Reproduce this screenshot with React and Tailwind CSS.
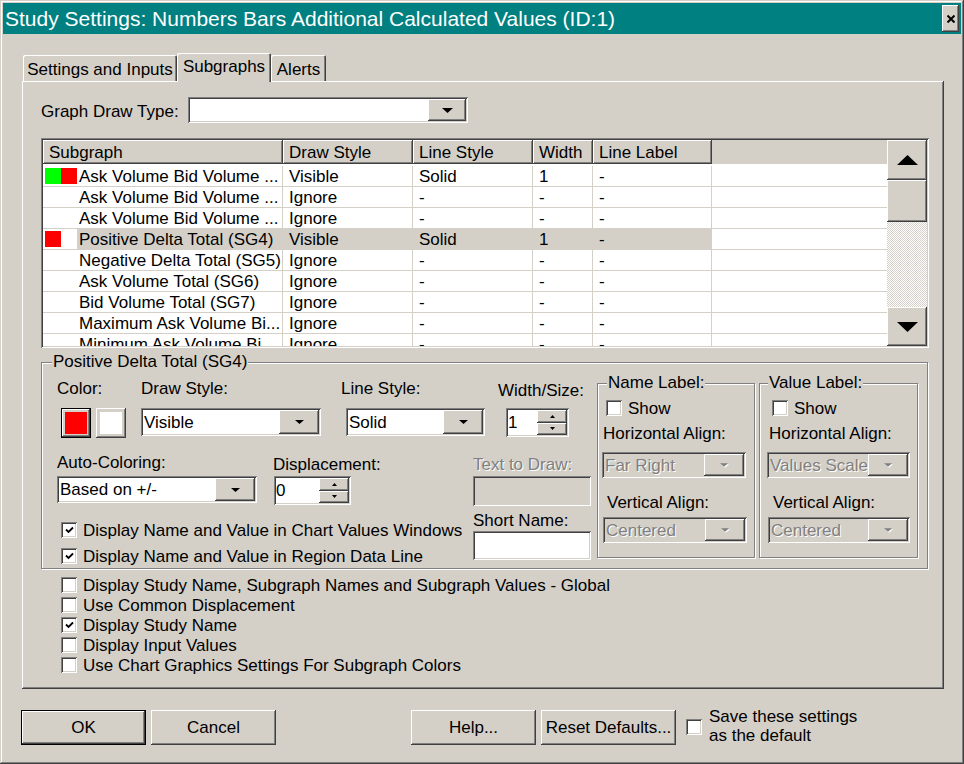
const RAISED =
  "shadow-[inset_-1px_-1px_0_#404040,inset_1px_1px_0_#ffffff,inset_-2px_-2px_0_#808080,inset_2px_2px_0_#d4d0c8]";
const SUNKEN =
  "shadow-[inset_1px_1px_0_#808080,inset_-1px_-1px_0_#ffffff,inset_2px_2px_0_#404040,inset_-2px_-2px_0_#d4d0c8]";
const ETCHED = "border border-[#808080] shadow-[inset_1px_1px_0_#ffffff,1px_1px_0_#ffffff]";
const DISABLED = "text-[#808080] [text-shadow:1px_1px_0_#ffffff]";

function Arrow({ dir = "down", w = 9, h = 5, disabled }) {
  const pts = dir === "down" ? `0,0 ${w},0 ${w / 2},${h}` : `0,${h} ${w},${h} ${w / 2},0`;
  return (
    <svg width={w} height={h + (disabled ? 1 : 0)} viewBox={`0 0 ${w + (disabled ? 1 : 0)} ${h + (disabled ? 1 : 0)}`}>
      {disabled && <polygon points={pts} fill="#ffffff" transform="translate(1,1)" />}
      <polygon points={pts} fill={disabled ? "#808080" : "#000000"} />
    </svg>
  );
}

function Combo({ className, text, disabled, btn = "w-[40px]", arrowW = 9 }) {
  return (
    <div className={`flex p-[2px] ${SUNKEN} ${disabled ? "bg-[#d4d0c8]" : "bg-white"} ${className}`}>
      <div className={`flex-1 flex items-center pl-[1px] pt-[1px] overflow-hidden whitespace-nowrap ${disabled ? DISABLED : ""}`}>
        {text}
      </div>
      <div className={`flex items-center justify-center bg-[#d4d0c8] ${RAISED} ${btn}`}>
        <Arrow w={arrowW} h={arrowW > 9 ? 5 : 4} disabled={disabled} />
      </div>
    </div>
  );
}

function Spin({ className, value }) {
  return (
    <div className={`flex p-[2px] bg-white ${SUNKEN} ${className}`}>
      <div className="flex-1 flex items-center pt-[1px]">{value}</div>
      <div className="w-[30px] flex flex-col">
        <div className={`flex-1 flex items-center justify-center bg-[#d4d0c8] ${RAISED}`}>
          <Arrow dir="up" w={5} h={3} />
        </div>
        <div className={`flex-1 flex items-center justify-center bg-[#d4d0c8] ${RAISED}`}>
          <Arrow w={5} h={3} />
        </div>
      </div>
    </div>
  );
}

function Check({ checked }) {
  return (
    <div className={`w-[16px] h-[16px] shrink-0 bg-white ${SUNKEN} flex items-center justify-center`}>
      {checked && (
        <svg width="9" height="8" viewBox="0 0 9 8">
          <polyline points="1,3.5 3.5,6 8,1.5" fill="none" stroke="#000" strokeWidth="1.8" />
        </svg>
      )}
    </div>
  );
}

function CheckRow({ checked, label, className = "h-[20px]" }) {
  return (
    <div className={`flex items-center gap-[6px] ${className}`}>
      <Check checked={checked} />
      <span className="whitespace-nowrap pt-[1px]">{label}</span>
    </div>
  );
}

function Group({ title, className, titleX = "left-[10px]", children }) {
  return (
    <div className={`relative ${ETCHED} ${className}`}>
      <span className={`absolute top-[-11px] ${titleX} bg-[#d4d0c8] px-[1px] leading-[20px] whitespace-nowrap`}>
        {title}
      </span>
      {children}
    </div>
  );
}

const rows = [
  { sw: ["#00ff00", "#ff0000"], name: "Ask Volume Bid Volume ...", ds: "Visible", ls: "Solid", w: "1" },
  { sw: [], name: "Ask Volume Bid Volume ...", ds: "Ignore", ls: "-", w: "-" },
  { sw: [], name: "Ask Volume Bid Volume ...", ds: "Ignore", ls: "-", w: "-" },
  { sw: ["#ff0000"], name: "Positive Delta Total (SG4)", ds: "Visible", ls: "Solid", w: "1", sel: true },
  { sw: [], name: "Negative Delta Total (SG5)", ds: "Ignore", ls: "-", w: "-" },
  { sw: [], name: "Ask Volume Total (SG6)", ds: "Ignore", ls: "-", w: "-" },
  { sw: [], name: "Bid Volume Total (SG7)", ds: "Ignore", ls: "-", w: "-" },
  { sw: [], name: "Maximum Ask Volume Bi...", ds: "Ignore", ls: "-", w: "-" },
  { sw: [], name: "Minimum Ask Volume Bi...", ds: "Ignore", ls: "-", w: "-" },
];

function SubgraphList() {
  const head = [
    ["Subgraph", "w-[240px]"],
    ["Draw Style", "w-[130px]"],
    ["Line Style", "w-[120px]"],
    ["Width", "w-[60px]"],
    ["Line Label", "w-[119px]"],
  ];
  return (
    <div className={`flex w-[888px] h-[210px] p-[2px] bg-white ${SUNKEN}`}>
      <div className="flex-1 flex flex-col overflow-hidden">
        <div className="flex h-[24px] shrink-0 bg-[#d4d0c8]">
          {head.map(([t, w]) => (
            <div key={t} className={`${w} ${RAISED} flex items-center pl-[6px] pt-[2px]`}>
              {t}
            </div>
          ))}
          <div className="flex-1" />
        </div>
        <div className="pt-[2px]">
          {rows.map((r, i) => {
            const hl = r.sel ? "bg-[#d4d0c8]" : "";
            return (
              <div key={i} className="flex h-[21px] shrink-0 border-b border-[#d4d0c8]">
                <div className="w-[240px] flex border-r border-[#d4d0c8]">
                  <div className="w-[34px] flex items-center pl-[2px]">
                    {r.sw.map((c, j) => (
                      <div key={j} className="w-[16px] h-[16px]" style={{ background: c }} />
                    ))}
                  </div>
                  <div className={`flex-1 flex items-center pl-[2px] pt-[1px] whitespace-nowrap ${hl}`}>{r.name}</div>
                </div>
                <div className={`w-[130px] flex items-center pl-[6px] pt-[1px] border-r border-[#d4d0c8] ${hl}`}>{r.ds}</div>
                <div className={`w-[120px] flex items-center pl-[6px] pt-[1px] border-r border-[#d4d0c8] ${hl}`}>{r.ls}</div>
                <div className={`w-[60px] flex items-center pl-[6px] pt-[1px] border-r border-[#d4d0c8] ${hl}`}>{r.w}</div>
                <div className={`w-[119px] flex items-center pl-[6px] pt-[1px] border-r border-[#d4d0c8] ${hl}`}>-</div>
                <div className="flex-1" />
              </div>
            );
          })}
        </div>
      </div>
      <div className="w-[40px] flex flex-col shrink-0">
        <div className={`h-[40px] flex items-center justify-center bg-[#d4d0c8] ${RAISED}`}>
          <Arrow dir="up" w={21} h={10} />
        </div>
        <div className={`h-[42px] bg-[#d4d0c8] ${RAISED}`} />
        <div className="h-[85px] bg-[image:repeating-conic-gradient(#d4d0c8_0_25%,#ffffff_0_50%)] bg-[length:2px_2px]" />
        <div className={`h-[39px] flex items-center justify-center bg-[#d4d0c8] ${RAISED}`}>
          <Arrow w={21} h={10} />
        </div>
      </div>
    </div>
  );
}

function Button({ className, children, def }) {
  return (
    <div className={`h-[35px] ${def ? "border border-black" : ""} ${className}`}>
      <div className={`h-full flex items-center justify-center pt-[1px] bg-[#d4d0c8] ${RAISED}`}>{children}</div>
    </div>
  );
}

export default function App() {
  return (
    <div
      className={`w-[964px] h-[764px] bg-[#d4d0c8] p-[3px] flex flex-col text-[17px] text-black font-['Liberation_Sans',Arial,sans-serif] shadow-[inset_-1px_-1px_0_#404040,inset_1px_1px_0_#d4d0c8,inset_-2px_-2px_0_#808080,inset_2px_2px_0_#ffffff]`}
    >
      {/* title bar */}
      <div className="h-[31px] bg-[#008080] flex items-center justify-between pl-[2px] pr-[2px]">
        <span className="text-white text-[21px] whitespace-nowrap">
          Study Settings: Numbers Bars Additional Calculated Values (ID:1)
        </span>
        <div className={`w-[17px] h-[27px] bg-[#d4d0c8] ${RAISED} flex items-center justify-center`}>
          <svg width="8" height="8" viewBox="0 0 8 8">
            <path d="M0.5 0.5 L7.5 7.5 M7.5 0.5 L0.5 7.5" stroke="#000" strokeWidth="2" />
          </svg>
        </div>
      </div>

      <div className="pl-[19px] pt-[19px]">
        {/* tabs */}
        <div className="flex items-end h-[28px] pl-[1px]">
          <div className="w-[154px] h-[26px] pt-[4px] flex items-center justify-center shadow-[inset_1px_1px_0_#ffffff,inset_-1px_0_0_#404040,inset_-2px_0_0_#808080] rounded-t-[2px]">
            Settings and Inputs
          </div>
          <div className="relative z-10 w-[94px] h-[29px] mb-[-1px] pb-[1px] flex items-center justify-center bg-[#d4d0c8] shadow-[inset_1px_1px_0_#ffffff,inset_-1px_0_0_#404040,inset_-2px_0_0_#808080] rounded-t-[2px]">
            Subgraphs
          </div>
          <div className="w-[55px] h-[26px] pt-[4px] flex items-center justify-center shadow-[inset_1px_1px_0_#ffffff,inset_-1px_0_0_#404040,inset_-2px_0_0_#808080] rounded-t-[2px]">
            Alerts
          </div>
        </div>

        {/* tab panel */}
        <div className={`w-[922px] h-[608px] pl-[19px] pt-[16px] ${RAISED}`}>
          <div className="flex items-center h-[26px]">
            <span className="w-[147px] whitespace-nowrap pt-[4px]">Graph Draw Type:</span>
            <Combo className="w-[280px] h-[26px]" text="" btn="w-[38px]" arrowW={11} />
          </div>

          <div className="mt-[15px]">
            <SubgraphList />
          </div>

          {/* subgraph settings */}
          <Group title="Positive Delta Total (SG4)" className="mt-[14px] w-[887px] h-[207px] flex">
            <div className="w-[555px] pl-[15px] pt-[15px]">
              {/* row 1 */}
              <div className="flex">
                <div className="w-[84px]">
                  <div className="h-[20px] leading-[20px] mt-[1px]">Color:</div>
                  <div className="flex gap-[5px] mt-[9px] pl-[4px]">
                    <div className="w-[30px] h-[30px] border border-black">
                      <div className={`h-full p-[3px] ${RAISED}`}>
                        <div className="h-full bg-[#ff0000]" />
                      </div>
                    </div>
                    <div className={`w-[30px] h-[30px] p-[4px] ${RAISED}`}>
                      <div className="h-full bg-white" />
                    </div>
                  </div>
                </div>
                <div className="w-[200px]">
                  <div className="h-[20px] leading-[20px] mt-[1px]">Draw Style:</div>
                  <Combo className="mt-[9px] w-[180px] h-[28px]" text="Visible" />
                </div>
                <div className="w-[157px]">
                  <div className="h-[20px] leading-[20px] mt-[1px]">Line Style:</div>
                  <Combo className="mt-[9px] ml-[5px] w-[139px] h-[28px]" text="Solid" />
                </div>
                <div>
                  <div className="h-[20px] leading-[20px] mt-[3px]">Width/Size:</div>
                  <Spin className="mt-[7px] ml-[8px] w-[63px] h-[29px]" value="1" />
                </div>
              </div>

              {/* row 2 */}
              <div className="flex mt-[14px]">
                <div className="w-[216px]">
                  <div className="h-[20px] leading-[20px] mt-[1px]">Auto-Coloring:</div>
                  <Combo className="mt-[3px] w-[200px] h-[27px]" text="Based on +/-" />
                </div>
                <div className="w-[200px]">
                  <div className="h-[20px] leading-[20px] mt-[3px]">Displacement:</div>
                  <Spin className="mt-[1px] ml-[1px] w-[77px] h-[29px]" value="0" />
                </div>
                <div>
                  <div className={`h-[20px] leading-[20px] mt-[3px] ${DISABLED}`}>Text to Draw:</div>
                  <div className={`mt-[1px] w-[118px] h-[30px] ${SUNKEN}`} />
                </div>
              </div>

              {/* row 3 */}
              <div className="flex mt-[4px]">
                <div className="w-[416px] pt-[7px] pl-[4px]">
                  <CheckRow checked label="Display Name and Value in Chart Values Windows" className="h-[26px]" />
                  <CheckRow checked label="Display Name and Value in Region Data Line" className="h-[26px]" />
                </div>
                <div>
                  <div className="h-[20px] leading-[20px] mt-[1px]">Short Name:</div>
                  <div className={`w-[118px] h-[29px] bg-white ${SUNKEN}`} />
                </div>
              </div>
            </div>

            <Group title="Name Label:" className="mt-[20px] w-[158px] h-[175px]" titleX="left-[9px]">
              <div className="flex flex-col pt-[16px] pl-[8px]">
                <CheckRow label="Show" className="h-[16px]" />
                <div className="h-[20px] leading-[20px] mt-[8px] ml-[-3px]">Horizontal Align:</div>
                <Combo className="mt-[8px] ml-[-4px] w-[144px] h-[26px]" text="Far Right" disabled />
                <div className="h-[20px] leading-[20px] mt-[15px] ml-[1px]">Vertical Align:</div>
                <Combo className="mt-[4px] ml-[-3px] w-[144px] h-[26px]" text="Centered" disabled />
              </div>
            </Group>

            <Group title="Value Label:" className="mt-[20px] ml-[4px] w-[159px] h-[175px]" titleX="left-[8px]">
              <div className="flex flex-col pt-[16px] pl-[12px]">
                <CheckRow label="Show" className="h-[16px]" />
                <div className="h-[20px] leading-[20px] mt-[8px] ml-[-3px]">Horizontal Align:</div>
                <Combo className="mt-[8px] ml-[-5px] w-[143px] h-[26px]" text="Values Scale" disabled />
                <div className="h-[20px] leading-[20px] mt-[15px] ml-[1px]">Vertical Align:</div>
                <Combo className="mt-[4px] ml-[-4px] w-[142px] h-[26px]" text="Centered" disabled />
              </div>
            </Group>
          </Group>

          <div className="mt-[6px] pl-[20px]">
            <CheckRow label="Display Study Name, Subgraph Names and Subgraph Values - Global" />
            <CheckRow label="Use Common Displacement" />
            <CheckRow checked label="Display Study Name" />
            <CheckRow label="Display Input Values" />
            <CheckRow label="Use Chart Graphics Settings For Subgraph Colors" />
          </div>
        </div>
      </div>

      {/* buttons */}
      <div className="flex items-center mt-[20px] pl-[18px]">
        <Button def className="w-[125px]">OK</Button>
        <Button className="w-[125px] ml-[5px]">Cancel</Button>
        <Button className="w-[125px] ml-[135px]">Help...</Button>
        <Button className="w-[135px] ml-[5px]">Reset Defaults...</Button>
        <div className="ml-[10px]">
          <Check />
        </div>
        <div className="ml-[7px] leading-[19px] mt-[-2px]">
          Save these settings
          <br />
          as the default
        </div>
      </div>
    </div>
  );
}
